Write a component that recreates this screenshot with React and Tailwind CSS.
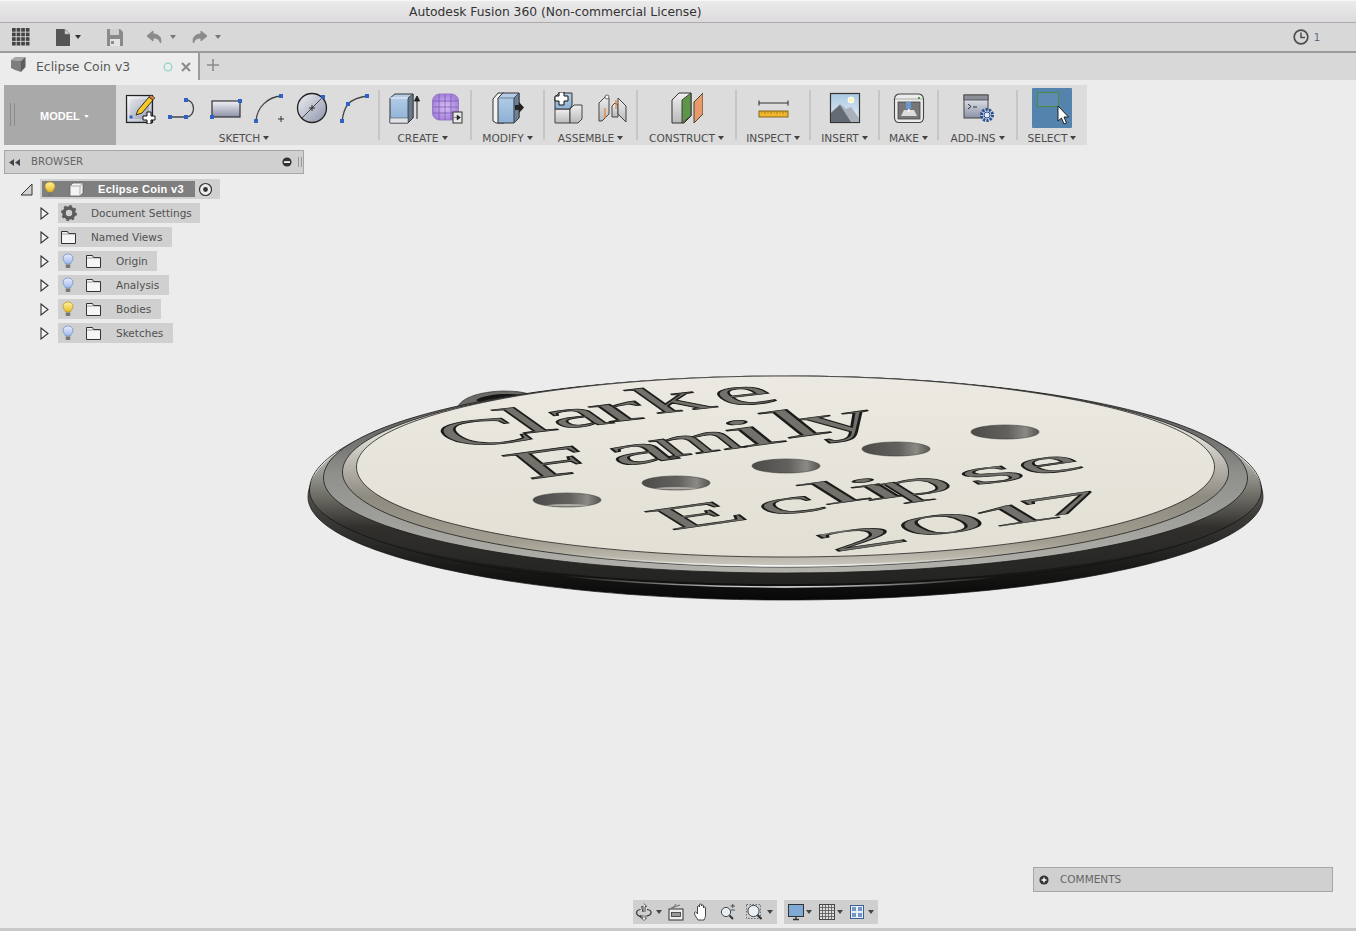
import React from "react";

const Caret = ({ c = "#555", w = 6, h = 4 }) => (
  <svg width={w} height={h} viewBox="0 0 6 4" className="shrink-0"><polygon points="0,0 6,0 3,4" fill={c} /></svg>
);

const Sq = ({ x, y, s = 4 }) => <rect x={x - s / 2} y={y - s / 2} width={s} height={s} fill="#2f62c4" />;

const I = ({ children, w = 32, h = 32 }) => (
  <svg width={w} height={h} viewBox={`0 0 ${w} ${h}`} className="shrink-0">{children}</svg>
);

const Defs = () => (
  <svg width="0" height="0" className="absolute">
    <defs>
      <linearGradient id="gA" x1="0" y1="0" x2="0" y2="1"><stop offset="0" stopColor="#f2f3f6" /><stop offset="1" stopColor="#8b90a8" /></linearGradient>
      <linearGradient id="gB" x1="0" y1="0" x2="1" y2="1"><stop offset="0" stopColor="#f0f1f4" /><stop offset="1" stopColor="#8d93aa" /></linearGradient>
      <linearGradient id="gBlue" x1="0" y1="0" x2="0" y2="1"><stop offset="0" stopColor="#b7cfe7" /><stop offset="1" stopColor="#8db0d6" /></linearGradient>
      <linearGradient id="gGrey" x1="0" y1="0" x2="0" y2="1"><stop offset="0" stopColor="#f0f0f0" /><stop offset="1" stopColor="#b9b9b9" /></linearGradient>
      <linearGradient id="gSky" x1="0" y1="0" x2="0" y2="1"><stop offset="0" stopColor="#a9c9e4" /><stop offset="1" stopColor="#e9eef3" /></linearGradient>
      <linearGradient id="gYellow" x1="0" y1="0" x2="0" y2="1"><stop offset="0" stopColor="#fff59a" /><stop offset="1" stopColor="#e8b92a" /></linearGradient>
      <linearGradient id="gBulb" x1="0" y1="0" x2="0" y2="1"><stop offset="0" stopColor="#e8efff" /><stop offset="1" stopColor="#9db8ea" /></linearGradient>
      <radialGradient id="gPurple"><stop offset="0" stopColor="#d9c2f7" /><stop offset="1" stopColor="#a683dc" /></radialGradient>
    </defs>
  </svg>
);

/* ---- ribbon icons ---- */
const SketchNew = () => (
  <I>
    <rect x="2.5" y="3.5" width="26" height="27" fill="url(#gB)" stroke="#222" strokeWidth="1.2" />
    <rect x="5" y="6" width="21" height="22" fill="none" stroke="#fff" strokeOpacity=".7" />
    <path d="M12 23 L14 18 L25 5 L29 8 L18 21 Z" fill="#f6c828" stroke="#222" strokeWidth=".9" />
    <path d="M25 5 L27 3 L31 6 L29 8 Z" fill="#d9824a" stroke="#222" strokeWidth=".6" />
    <Sq x={7} y={25} s={3} />
    <path d="M23 20h4v4h4v4h-4v4h-4v-4h-4v-4h4z" fill="#fff" stroke="#111" strokeWidth="1" />
  </I>
);
const SketchLine = () => (
  <I>
    <path d="M3 25 H19 M19 8 C29 8 29 25 19 25" fill="none" stroke="#444" strokeWidth="1.3" />
    <Sq x={3} y={25} /><Sq x={19} y={25} /><Sq x={19} y={8} />
  </I>
);
const SketchRect = () => (
  <I>
    <rect x="2" y="9" width="28" height="16" fill="url(#gA)" stroke="#333" strokeWidth="1.2" />
    <Sq x={30} y={9} /><Sq x={2} y={25} />
  </I>
);
const SketchArc = () => (
  <I>
    <path d="M3 29 C4 15 15 5 28 4" fill="none" stroke="#444" strokeWidth="1.3" />
    <Sq x={3} y={29} /><Sq x={28} y={4} />
    <path d="M25 27h6M28 24v6" stroke="#333" strokeWidth="1" />
  </I>
);
const SketchCircle = () => (
  <I>
    <circle cx="16" cy="16" r="14.5" fill="url(#gB)" stroke="#222" strokeWidth="1.3" />
    <path d="M5 27 L27 5" stroke="#333" strokeWidth=".9" />
    <path d="M13 16h6M16 13v6" stroke="#222" strokeWidth=".9" />
    <Sq x={27} y={5} />
  </I>
);
const SketchSpline = () => (
  <I>
    <path d="M3 29 C4 22 6 16 9 12 C14 7 21 5 28 4" fill="none" stroke="#444" strokeWidth="1.3" />
    <Sq x={3} y={29} /><Sq x={9} y={12} /><Sq x={28} y={4} />
  </I>
);
const CreateBox = () => (
  <I>
    <path d="M2 6 L7 2 H25 L25 26 L20 31 H2 Z" fill="url(#gBlue)" stroke="#333" strokeWidth="1" />
    <path d="M20 6 L25 2 V26 L20 31 Z" fill="#66798f" stroke="#333" strokeWidth=".8" />
    <path d="M2 6 H20" fill="none" stroke="#eef3f8" strokeWidth="1" />
    <path d="M2 26 H20 V31 H2 Z" fill="#dfe3e8" stroke="#555" strokeWidth=".6" />
    <path d="M29 27 V6 M26.5 9 L29 4 L31.5 9 Z" stroke="#222" strokeWidth="1" fill="#222" />
  </I>
);
const CreateMesh = () => (
  <I>
    <rect x="1.5" y="2" width="26" height="26" rx="7" fill="url(#gPurple)" stroke="#9a7cc6" strokeWidth="1" />
    <path d="M8 2 V28 M14 2 V28 M20 2 V28 M2 9 H27 M2 15 H27 M2 21 H27" stroke="#7355a8" strokeWidth=".7" />
    <rect x="22" y="20" width="9" height="11" fill="#e8e8e8" stroke="#333" strokeWidth="1" />
    <path d="M23 25.5 H26 V23 L29.5 25.5 L26 28 V25.5" fill="#222" stroke="#222" strokeWidth=".5" />
  </I>
);
const ModifyIcon = () => (
  <I>
    <path d="M1 7 L6 1 H12 V31 H4 L1 29 Z" fill="#f2f2f2" stroke="#333" strokeWidth="1" />
    <path d="M6 6 L11 1 H27 V26 L22 31 H6 Z" fill="url(#gBlue)" stroke="#333" strokeWidth="1" />
    <path d="M22 6 L27 1 V26 L22 31 Z" fill="#6d8096" stroke="#333" strokeWidth=".8" />
    <path d="M6 6 H22 V31" fill="none" stroke="#4a6585" strokeWidth=".7" />
    <path d="M23 13 H27 V10 L32 15.5 L27 21 V18 H23 Z" fill="#222" />
  </I>
);
const AssembleNew = () => (
  <I>
    <path d="M2 17 H17 V31 H2 Z" fill="url(#gGrey)" stroke="#444" strokeWidth="1" />
    <path d="M17 17 L21 13 H29 V27 L25 31 H17 Z" fill="url(#gGrey)" stroke="#444" strokeWidth="1" />
    <path d="M2 5 L6 1 H19 V13 L17 17 H2 Z" fill="url(#gBlue)" stroke="#333" strokeWidth="1" />
    <path d="M6 0 H11 V4 H15 V9 H11 V13 H6 V9 H2 V4 H6 Z" fill="#fff" stroke="#111" strokeWidth="1" />
  </I>
);
const AssembleJoint = () => (
  <I>
    <path d="M3 11 L10 4 L13 6 V22 L6 29 H3 Z" fill="url(#gGrey)" stroke="#444" strokeWidth="1" />
    <circle cx="11" cy="5" r="2" fill="#fff" stroke="#444" strokeWidth=".8" />
    <path d="M16 14 L19 11 L22 13 V25 L16 25 Z" fill="url(#gGrey)" stroke="#444" strokeWidth="1" />
    <path d="M22 6 L30 14 V30 L22 22 Z" fill="url(#gGrey)" stroke="#444" strokeWidth="1" />
    <path d="M9 16 V26 M20 8 V17" stroke="#ee7d22" strokeWidth="1.2" />
  </I>
);
const ConstructIcon = () => (
  <I>
    <path d="M1 8 L8 1 H20 V24 L13 31 H1 Z" fill="url(#gGrey)" stroke="#333" strokeWidth="1" />
    <path d="M11 8 L20 1 V24 L11 31 Z" fill="#5f9548" stroke="#333" strokeWidth=".9" />
    <path d="M23 10 L32 1 V22 L23 31 Z" fill="#e89b68" stroke="#333" strokeWidth=".9" />
  </I>
);
const InspectIcon = () => (
  <I>
    <path d="M2 11 H31 M2 8.5 V13.5 M31 8.5 V13.5" stroke="#333" strokeWidth="1.1" fill="none" />
    <rect x="2" y="19" width="29" height="6" fill="#f0b62d" stroke="#7d5c14" strokeWidth=".9" />
    <path d="M5 19v2M8 19v3M11 19v2M14 19v3M17 19v2M20 19v3M23 19v2M26 19v3M29 19v2" stroke="#8a6818" strokeWidth=".7" />
  </I>
);
const InsertIcon = () => (
  <I>
    <rect x="1.5" y="1.5" width="29" height="29" fill="url(#gSky)" stroke="#333" strokeWidth="1.2" />
    <circle cx="22" cy="8" r="3" fill="#fff4b8" stroke="#fff" />
    <path d="M2 30 V20 L11 12 L17 17 L22 15 L30 26 V30 Z" fill="#a9b1ba" />
    <path d="M2 30 V21 L11 13 L22 30 Z" fill="#636a73" />
  </I>
);
const MakeIcon = () => (
  <I>
    <path d="M1.5 7 Q2 2 7 2 H25 Q30 2 30.5 7 V26 Q30 30.5 26 30.5 H6 Q2 30.5 1.5 26 Z" fill="#ececec" stroke="#444" strokeWidth="1.1" />
    <rect x="5" y="10" width="22" height="17" fill="#777" stroke="#444" strokeWidth=".8" />
    <path d="M2 7 H30" stroke="#aaa" />
    <path d="M8 24 L11 18 H21 L24 24 Z" fill="#dcdcdc" />
    <rect x="13" y="10" width="5" height="7" fill="#6a98d0" />
    <rect x="15" y="17" width="1.5" height="3" fill="#fff" />
    <rect x="25" y="5" width="2" height="2" fill="#38a83a" />
  </I>
);
const AddInsIcon = () => (
  <I>
    <rect x="2" y="3" width="24" height="23" fill="url(#gA)" stroke="#444" strokeWidth="1" />
    <rect x="2" y="3" width="24" height="5" fill="#8a8f99" stroke="#444" strokeWidth=".8" />
    <path d="M6 12 L9 14.5 L6 17 M11 15 H15" stroke="#222" strokeWidth=".9" fill="none" />
    <circle cx="25" cy="23" r="5.5" fill="#cfd9ec" stroke="#2a4f8f" strokeWidth="3" strokeDasharray="2.2 1.2" />
    <circle cx="25" cy="23" r="3" fill="#e6ecf6" stroke="#2a4f8f" strokeWidth="1" />
  </I>
);
const SelectIcon = () => (
  <div className="w-[40px] h-[40px] bg-[#5483ad] rounded-[1px] relative shrink-0">
    <svg width="40" height="40" viewBox="0 0 40 40">
      <rect x="5.5" y="4.5" width="21" height="14" fill="#5f8bb2" stroke="#4f8a45" strokeWidth="1" />
      <path d="M26 18 V33 L29.5 30 L32 36 L34.5 35 L32 29 L36.5 29 Z" fill="#fff" stroke="#111" strokeWidth=".9" />
    </svg>
  </div>
);

const Group = ({ width, label, children, last, pad = "pr-0" }) => (
  <div className={`${width} flex flex-col items-center relative`}>
    <div className="h-[32px] mt-[7px] flex items-center justify-center gap-[11px] w-full">{children}</div>
    <div className={`${pad} mt-[8px] h-[12px] flex items-center gap-[3px] text-[10.6px] leading-[12px] text-[#4d4d4d]`}>
      <span>{label}</span><Caret c="#444" />
    </div>
    {!last && <div className="absolute right-[-1px] top-[5px] bottom-[5px] w-[2px] bg-[#c6c6c6]" />}
  </div>
);

/* ---- tree icons ---- */
const Bulb = ({ on }) => (
  <svg width="12" height="16" viewBox="0 0 12 16" className="shrink-0">
    <path d="M6 1 C2.7 1 1 3.2 1 5.5 C1 8 3.5 9 3.5 11 H8.5 C8.5 9 11 8 11 5.5 C11 3.2 9.3 1 6 1 Z" fill={on ? "url(#gYellow)" : "url(#gBulb)"} stroke={on ? "#b8962a" : "#6f8fc9"} strokeWidth=".8" />
    <rect x="3.7" y="11.5" width="4.6" height="3.5" rx="1" fill="#777" />
  </svg>
);
const Folder = () => (
  <svg width="15" height="13" viewBox="0 0 15 13" className="shrink-0">
    <path d="M.5 12.5 V.5 H6.5 L7.5 2.5 H14.5 V12.5 Z" fill="#f5f5f5" stroke="#333" strokeWidth="1" />
    <path d="M.5 3 H14.5" stroke="#666" strokeWidth=".6" />
  </svg>
);
const Arrow = () => (
  <svg width="9" height="13" viewBox="0 0 9 13" className="shrink-0">
    <path d="M1 1 L8 6.5 L1 12 Z" fill="#f4f4f4" stroke="#333" strokeWidth="1.1" />
  </svg>
);
const Gear = () => (
  <svg width="16" height="16" viewBox="0 0 16 16" className="shrink-0">
    <circle cx="8" cy="8" r="5" fill="none" stroke="#5c5c5c" strokeWidth="3.6" />
    <circle cx="8" cy="8" r="7" fill="none" stroke="#5c5c5c" strokeWidth="2" strokeDasharray="2.6 2.9" />
  </svg>
);

const Row = ({ w, children }) => (
  <div className="flex items-center h-[20px] mt-[4px] ml-[40px]">
    <Arrow />
    <div className={`${w} ml-[9px] h-[20px] bg-[#d0d0d0] flex items-center text-[10.5px] text-[#505050]`}>{children}</div>
  </div>
);

const Label = ({ ml, children }) => <span className={`${ml} mt-[2px]`}>{children}</span>;

const BulbRow = ({ w, on, label }) => (
  <Row w={w}>
    <span className="ml-[4px] w-[12px] flex"><Bulb on={on} /></span>
    <span className="ml-[12px] flex"><Folder /></span>
    <Label ml="ml-[15px]">{label}</Label>
  </Row>
);

/* ---- bottom nav ---- */
const NavCaret = () => <Caret c="#444" />;
const NavBar = () => (
  <div className="flex ml-[633px] gap-[7px] mb-[4px]">
    <div className="w-[144px] h-[24px] bg-[#cfcfcf] flex items-center pl-[3px]">
      <svg width="16" height="18" viewBox="0 0 16 18" className="shrink-0">
        <path d="M8 .5 L10.5 3.5 H9 V9 M7 9 V3.5 H5.5 Z" fill="#fff" stroke="#333" strokeWidth=".8" />
        <path d="M9 12 V15 H10.5 L8 17.5 L5.5 15 H7 V12" fill="#fff" stroke="#333" strokeWidth=".8" />
        <path d="M5 13.5 C-1 12.5 -.5 7 4.5 6.5 M11 6.5 C16.5 7 16.5 12 10.5 13.2" fill="none" stroke="#333" strokeWidth="1.2" />
        <path d="M5.5 11.5 L3 13.5 L5.5 15.5 Z" fill="#333" />
      </svg>
      <span className="ml-[4px] flex"><NavCaret /></span>
      <svg width="16" height="18" viewBox="0 0 16 18" className="shrink-0 ml-[6px]">
        <rect x="1" y="6" width="14" height="11" fill="#eee" stroke="#333" strokeWidth="1" />
        <rect x="3.5" y="9.5" width="9" height="4" fill="#999" stroke="#333" strokeWidth=".8" />
        <path d="M3 5 L12 2 M5 5 L8 1" stroke="#555" strokeWidth=".8" />
      </svg>
      <svg width="17" height="18" viewBox="0 0 17 18" className="shrink-0 ml-[9px]">
        <path d="M5 17 C3 14 1 11 1.5 9.5 C2.5 8 4 10 4.5 11 V4 C4.5 2.5 6.5 2.5 6.5 4 V2 C6.5 .5 8.5 .5 8.5 2 V3 C8.5 1.5 10.5 1.5 10.5 3 V5 C10.5 3.5 12.5 3.5 12.5 5 V12 C12.5 14 12 15 11 17 Z" fill="#fff" stroke="#333" strokeWidth=".9" />
      </svg>
      <svg width="16" height="18" viewBox="0 0 16 18" className="shrink-0 ml-[10px]">
        <circle cx="6" cy="9" r="4.6" fill="#e8f0f6" stroke="#444" strokeWidth="1" />
        <path d="M9.5 12.5 L13 16" stroke="#333" strokeWidth="2" />
        <path d="M10.5 3 H15 M12.7 1 V5 M10.5 7 H15" stroke="#444" strokeWidth=".9" />
      </svg>
      <svg width="17" height="18" viewBox="0 0 17 18" className="shrink-0 ml-[10px]">
        <rect x=".5" y="1.5" width="14" height="14" fill="none" stroke="#555" strokeWidth=".8" strokeDasharray="1.5 1.5" />
        <circle cx="7.5" cy="8" r="5.6" fill="#e8f0f6" stroke="#444" strokeWidth="1" />
        <path d="M11.5 12 L15.5 16" stroke="#333" strokeWidth="2.2" />
      </svg>
      <span className="ml-[4px] flex"><NavCaret /></span>
    </div>
    <div className="w-[94px] h-[24px] bg-[#cfcfcf] flex items-center pl-[4px]">
      <svg width="16" height="18" viewBox="0 0 16 18" className="shrink-0">
        <rect x=".5" y="1.5" width="15" height="12" fill="#7fa9d6" stroke="#333" strokeWidth="1" />
        <path d="M5 16.5 H11 M8 14 V16" stroke="#333" strokeWidth="1.4" />
      </svg>
      <span className="ml-[2px] flex"><NavCaret /></span>
      <svg width="16" height="18" viewBox="0 0 16 18" className="shrink-0 ml-[7px]">
        <rect x=".5" y="1.5" width="15" height="15" fill="#ddd" stroke="#444" strokeWidth="1" />
        <path d="M3.5 1.5V16.5M6.5 1.5V16.5M9.5 1.5V16.5M12.5 1.5V16.5M.5 4.5H15.5M.5 7.5H15.5M.5 10.5H15.5M.5 13.5H15.5" stroke="#555" strokeWidth=".8" />
      </svg>
      <span className="ml-[2px] flex"><NavCaret /></span>
      <svg width="14" height="14" viewBox="0 0 14 14" className="shrink-0 ml-[7px]">
        <rect x=".5" y=".5" width="13" height="13" fill="#e9eff7" stroke="#3e5f94" strokeWidth="1" />
        <rect x="2" y="2" width="4" height="4" fill="#6f97cc" /><rect x="8" y="2" width="4" height="4" fill="#6f97cc" />
        <rect x="2" y="8" width="4" height="4" fill="#6f97cc" /><rect x="8" y="8" width="4" height="4" fill="#6f97cc" />
      </svg>
      <span className="ml-[4px] flex"><NavCaret /></span>
    </div>
  </div>
);

/* ---- coin ---- */
const ell = (cx, cy, rx, rt, rb) => {
  const k = 0.5523;
  return `M${cx - rx} ${cy} C${cx - rx} ${cy - k * rt} ${cx - k * rx} ${cy - rt} ${cx} ${cy - rt} C${cx + k * rx} ${cy - rt} ${cx + rx} ${cy - k * rt} ${cx + rx} ${cy} C${cx + rx} ${cy + k * rb} ${cx + k * rx} ${cy + rb} ${cx} ${cy + rb} C${cx - k * rx} ${cy + rb} ${cx - rx} ${cy + k * rb} ${cx - rx} ${cy} Z`;
};

/* every engraved letter is placed by the centre of its box on the coin */
const Word = ({ m, letters }) => (
  <g fontFamily="'Liberation Serif', serif" fontSize="100" fill="#72716b" stroke="#1b1b19" strokeWidth="2" textAnchor="middle">
    {letters.map(([ch, x, y, off, k = 1], i) => (
      <text key={i} y={off} transform={`matrix(${m[0] * k} ${m[1] * k} ${m[2]} ${m[3]} ${x} ${y})`}>{ch}</text>
    ))}
  </g>
);

const Hole = ({ cx, cy, floor }) => (
  <g>
    <ellipse cx={cx} cy={cy} rx="35" ry="7.8" fill="#cfccc2" opacity=".6" />
    <ellipse cx={cx} cy={cy} rx="34" ry="7" fill="url(#hole)" stroke="#3a3a38" strokeWidth=".5" />
    {floor && <path d={`M${cx - 22} ${cy + 5.2} Q${cx} ${cy + 3} ${cx + 22} ${cy + 5.2} Q${cx} ${cy + 8} ${cx - 22} ${cy + 5.2} Z`} fill="#aeaca4" />}
  </g>
);

const Coin = () => (
  <svg width="980" height="240" viewBox="300 370 980 240" className="absolute left-[300px] top-[290px]">
    <defs>
      <linearGradient id="body" gradientUnits="userSpaceOnUse" x1="0" y1="470" x2="0" y2="600">
        <stop offset="0" stopColor="#6d6c66" /><stop offset=".35" stopColor="#3d3c39" /><stop offset=".75" stopColor="#1a1a18" /><stop offset="1" stopColor="#070707" />
      </linearGradient>
      <linearGradient id="torus" gradientUnits="userSpaceOnUse" x1="0" y1="465" x2="0" y2="590">
        <stop offset="0" stopColor="#a9a9a2" /><stop offset=".25" stopColor="#6d6c65" /><stop offset=".5" stopColor="#302f2c" /><stop offset="1" stopColor="#222220" />
      </linearGradient>
      <linearGradient id="flat" gradientUnits="userSpaceOnUse" x1="0" y1="430" x2="0" y2="575">
        <stop offset="0" stopColor="#6a6a67" /><stop offset=".3" stopColor="#8f8f8c" /><stop offset="1" stopColor="#b3b2ac" />
      </linearGradient>
      <linearGradient id="inner" gradientUnits="userSpaceOnUse" x1="0" y1="440" x2="0" y2="567">
        <stop offset="0" stopColor="#d9d8d1" /><stop offset=".45" stopColor="#8d8a80" /><stop offset=".8" stopColor="#a19d90" /><stop offset="1" stopColor="#cbc8be" />
      </linearGradient>
      <linearGradient id="plate" x1="0" y1="0" x2="0" y2="1">
        <stop offset="0" stopColor="#ebe9e1" /><stop offset="1" stopColor="#e2dfd4" />
      </linearGradient>
      <linearGradient id="hole" x1="0" y1="0" x2="1" y2="0">
        <stop offset="0" stopColor="#4c4b49" /><stop offset=".55" stopColor="#63625f" /><stop offset=".8" stopColor="#8b8a85" /><stop offset="1" stopColor="#55544f" />
      </linearGradient>
      <linearGradient id="glint" gradientUnits="userSpaceOnUse" x1="560" y1="0" x2="1000" y2="0">
        <stop offset="0" stopColor="#fff" stopOpacity="0" /><stop offset=".5" stopColor="#fff" stopOpacity=".95" /><stop offset="1" stopColor="#fff" stopOpacity="0" />
      </linearGradient>
    </defs>

    <path d="M457 408 C461 398 478 392 502 391 C514 391 524 392 528 394 L528 410 L460 412 Z" fill="#6b6a66" stroke="#222" strokeWidth=".6" />
    <path d="M476 400 C486 394 506 393 522 395 L505 402 L482 404 Z" fill="#151515" />

    <path d={ell(785.5, 497, 477.5, 121, 103)} fill="url(#body)" stroke="#111" strokeWidth=".7" />
    <path d={ell(785.5, 492, 476, 116, 92)} fill="url(#torus)" />
    <path d={ell(785.5, 490, 476, 114, 98)} fill="none" stroke="#111" strokeWidth=".8" />
    <path d={ell(785.5, 491, 477, 115, 96)} fill="none" stroke="url(#glint)" strokeWidth="1.4" />
    <path d={ell(785.5, 478, 462, 102, 95)} fill="url(#flat)" stroke="#1a1a1a" strokeWidth=".8" />
    <path d={ell(785.5, 472, 443, 96, 95)} fill="url(#inner)" stroke="#1a1a1a" strokeWidth=".8" />
    <path d={ell(785.5, 472, 444, 96, 94)} fill="none" stroke="url(#glint)" strokeWidth="1.6" />
    <path d={ell(785.5, 467, 429, 91, 90)} fill="url(#plate)" stroke="#222" strokeWidth=".8" />

    <Hole cx={567} cy={500} floor />
    <Hole cx={676} cy={483} floor />
    <Hole cx={786} cy={466} />
    <Hole cx={896} cy={449} />
    <Hole cx={1005} cy={432} />

    <Word m={[1.25, -0.14, 0.48, 0.34]} letters={[["C", 482, 432, 34], ["l", 525, 420, 34, 1.1], ["a", 577, 418, 23], ["r", 622, 412, 23, 1.2], ["k", 670, 399, 34], ["e", 745, 396, 23]]} />
    <Word m={[1.4, -0.19, 0.45, 0.36]} letters={[["F", 552, 462, 34], ["a", 640, 454, 23], ["m", 698, 444, 23, 0.75], ["i", 750, 432, 34, 1.2], ["l", 795, 423, 34, 1.2], ["y", 847, 427, 12]]} />
    <Word m={[1.35, -0.19, 0.45, 0.28]} letters={[["E", 697, 515, 34], ["c", 790, 506, 23], ["l", 834, 492, 34, 1.3], ["i", 876, 488, 34, 1.3], ["p", 922, 490, 12], ["s", 992, 475, 23, 1.1], ["e", 1050, 465, 23]]} />
    <Word m={[1.65, -0.24, 0.4, 0.24]} letters={[["2", 860, 538, 34], ["0", 941, 524, 34], ["1", 1014, 514, 34], ["7", 1065, 504, 34]]} />
  </svg>
);

export default function App() {
  return (
    <div className="w-[1356px] h-[931px] overflow-hidden flex flex-col bg-[#ececec] font-['DejaVu_Sans',sans-serif]">
      <Defs />
      {/* title */}
      <div className="h-[23px] pt-[1px] bg-gradient-to-b from-[#ecebec] to-[#dcdadc] border-t border-[#f8f8f8] border-b border-b-[#ababab] flex items-center pl-[409px] text-[12.3px] text-[#333] shrink-0">
        Autodesk Fusion 360 (Non-commercial License)
      </div>
      {/* quick toolbar */}
      <div className="h-[30px] bg-[#d8d8d8] border-b-2 border-[#9c9c9c] flex items-center shrink-0 relative">
        <svg width="18" height="18" viewBox="0 0 18 18" className="ml-[12px] shrink-0">
          {[0, 4.6, 9.2, 13.8].map((y) => [0, 4.6, 9.2, 13.8].map((x) => <rect key={`${x}-${y}`} x={x} y={y} width="3.7" height="3.7" fill="#444" />))}
        </svg>
        <svg width="14" height="17" viewBox="0 0 14 17" className="ml-[26px] shrink-0">
          <path d="M0 0 H8 L14 6 V17 H0 Z" fill="#555" /><path d="M8.7 0 L14 5.3 H8.7 Z" fill="#d8d8d8" stroke="#555" strokeWidth=".5" />
        </svg>
        <span className="ml-[5px] flex"><Caret c="#333" /></span>
        <svg width="16" height="17" viewBox="0 0 16 17" className="ml-[26px] shrink-0">
          <path d="M0 0 H13 L16 3 V17 H0 Z" fill="#8a8a8a" />
          <rect x="3" y="0" width="9" height="6" fill="#cfcfcf" />
          <rect x="3" y="10" width="10" height="7" fill="#e4e4e4" />
          <rect x="4" y="12" width="3" height="3" fill="#8a8a8a" />
        </svg>
        <svg width="17" height="14" viewBox="0 0 17 14" className="ml-[23px] shrink-0">
          <path d="M7 1 L1 6 L7 11 V8 C11 8 13 9 14.5 13 C16 8 13 4 7 4 Z" fill="#8b8b8b" stroke="#8b8b8b" />
        </svg>
        <span className="ml-[7px] flex"><Caret c="#777" /></span>
        <svg width="17" height="14" viewBox="0 0 17 14" className="ml-[15px] shrink-0">
          <path d="M10 1 L16 6 L10 11 V8 C6 8 4 9 2.5 13 C1 8 4 4 10 4 Z" fill="#8b8b8b" stroke="#8b8b8b" />
        </svg>
        <span className="ml-[7px] flex"><Caret c="#777" /></span>
        <div className="ml-auto mr-[36px] flex items-center gap-[5px]">
          <svg width="16" height="16" viewBox="0 0 16 16">
            <circle cx="8" cy="8" r="6.8" fill="none" stroke="#4d4d4d" strokeWidth="1.7" />
            <path d="M8 3.5 V8.5 H12" fill="none" stroke="#4d4d4d" strokeWidth="1.5" />
          </svg>
          <span className="text-[10px] text-[#566a80]">1</span>
        </div>
      </div>
      {/* tabs */}
      <div className="h-[27px] bg-[#d8d8d8] flex items-center shrink-0">
        <div className="w-[200px] h-full bg-[#ececec] border-r-2 border-[#9c9c9c] flex items-center relative">
          <svg width="16" height="16" viewBox="0 0 16 16" className="ml-[10px] mb-[3px] shrink-0">
            <path d="M1 3 L5 0 H15.5 L11 4 Z" fill="#a5a5a5" />
            <path d="M1 3 L11 4 V15 L5 13 L1 11 Z" fill="#7d7d7d" />
            <path d="M11 4 L15.5 0 V10 L11 15 Z" fill="#5e5e5e" />
          </svg>
          <span className="ml-[10px] mt-[2px] text-[12.4px] text-[#575757]">Eclipse Coin v3</span>
          <svg width="10" height="10" viewBox="0 0 10 10" className="ml-[33px] shrink-0 absolute left-[130px]">
            <circle cx="5" cy="5" r="3.8" fill="none" stroke="#8fd6c6" strokeWidth="1.3" />
          </svg>
          <svg width="10" height="10" viewBox="0 0 10 10" className="absolute left-[181px]">
            <path d="M1 1 L9 9 M9 1 L1 9" stroke="#8d8d8d" strokeWidth="2.2" />
          </svg>
        </div>
        <svg width="12" height="12" viewBox="0 0 12 12" className="ml-[7px] mb-[3px]">
          <path d="M6 0 V12 M0 6 H12" stroke="#8a8a8a" strokeWidth="1.6" />
        </svg>
      </div>

      {/* canvas */}
      <div className="flex-1 relative flex flex-col min-h-0">
        <Coin />
        {/* ribbon */}
        <div className="relative mt-[5px] ml-[4px] w-[1083px] h-[60px] bg-[#dcdcdc] flex shrink-0">
          <div className="w-[112px] h-full bg-[#a9a9a9] flex items-center relative shrink-0">
            <div className="absolute left-[6px] top-[18px] w-[5px] h-[23px] border-x border-[#8b8b8b]" />
            <div className="ml-[36px] mt-[2px] flex items-center gap-[4px] text-white font-bold text-[11px] font-['Liberation_Sans',sans-serif]">
              <span>MODEL</span><Caret c="#fff" w={5} h={3} />
            </div>
          </div>
          <Group width="w-[263px]" label="SKETCH" pad="pr-[7px]">
            <SketchNew /><SketchLine /><SketchRect /><SketchArc /><SketchCircle /><SketchSpline />
          </Group>
          <Group width="w-[92px]" label="CREATE" pad="pr-[5px]"><CreateBox /><CreateMesh /></Group>
          <Group width="w-[73px]" label="MODIFY"><ModifyIcon /></Group>
          <Group width="w-[93px]" label="ASSEMBLE"><AssembleNew /><AssembleJoint /></Group>
          <Group width="w-[99px]" label="CONSTRUCT"><ConstructIcon /></Group>
          <Group width="w-[74px]" label="INSPECT"><InspectIcon /></Group>
          <Group width="w-[69px]" label="INSERT"><InsertIcon /></Group>
          <Group width="w-[59px]" label="MAKE"><MakeIcon /></Group>
          <Group width="w-[79px]" label="ADD-INS"><AddInsIcon /></Group>
          <Group width="w-[70px]" label="SELECT" last><SelectIcon /></Group>
        </div>

        {/* browser */}
        <div className="relative mt-[5px] ml-[4px] w-[300px] h-[24px] bg-[#d0d0d0] border border-[#a6a6a6] flex items-center shrink-0">
          <svg width="11" height="7" viewBox="0 0 11 7" className="ml-[4px]">
            <path d="M5 0 V7 L0 3.5 Z M11 0 V7 L6 3.5 Z" fill="#444" />
          </svg>
          <span className="ml-[11px] text-[10.2px] text-[#666]">BROWSER</span>
          <svg width="10" height="10" viewBox="0 0 10 10" className="ml-auto">
            <circle cx="5" cy="5" r="4.6" fill="#333" /><rect x="2" y="4.2" width="6" height="1.7" fill="#fff" />
          </svg>
          <div className="ml-[6px] mr-[1px] w-[4px] h-[10px] border-x border-[#999]" />
        </div>

        <div className="relative mt-[5px] flex flex-col shrink-0">
          <div className="flex items-center h-[20px] ml-[20px]">
            <svg width="13" height="13" viewBox="0 0 13 13" className="shrink-0">
              <path d="M12 1 V12 H1 Z" fill="#d4d4d4" stroke="#333" strokeWidth="1" />
            </svg>
            <div className="ml-[7px] w-[180px] h-[20px] bg-[#d0d0d0] flex items-center">
              <div className="ml-[2px] w-[153px] h-[16px] bg-[#7f7f7f] flex items-center">
                <span className="ml-[2px] flex"><Bulb on /></span>
                <svg width="15" height="15" viewBox="0 0 15 15" className="ml-[13px] shrink-0">
                  <path d="M1 4 L4 1 H14 V11 L11 14 H1 Z" fill="#f4f4f4" stroke="#666" strokeWidth=".8" />
                  <path d="M1 4 H11 V14 M11 4 L14 1" fill="none" stroke="#999" strokeWidth=".8" />
                </svg>
                <span className="ml-[14px] text-white font-bold text-[11px] font-['Liberation_Sans',sans-serif] tracking-[0.3px]">Eclipse Coin v3</span>
              </div>
              <svg width="15" height="15" viewBox="0 0 15 15" className="ml-[3px]">
                <circle cx="7.5" cy="7.5" r="6" fill="#eee" stroke="#333" strokeWidth="1.2" />
                <circle cx="7.5" cy="7.5" r="2.4" fill="#333" />
              </svg>
            </div>
          </div>
          <Row w="w-[142px]">
            <span className="ml-[3px] flex"><Gear /></span>
            <Label ml="ml-[14px]">Document Settings</Label>
          </Row>
          <Row w="w-[114px]">
            <span className="ml-[3px] flex"><Folder /></span>
            <Label ml="ml-[15px]">Named Views</Label>
          </Row>
          <BulbRow w="w-[99px]" label="Origin" />
          <BulbRow w="w-[111px]" label="Analysis" />
          <BulbRow w="w-[103px]" on label="Bodies" />
          <BulbRow w="w-[115px]" label="Sketches" />
        </div>

        {/* bottom */}
        <div className="relative mt-auto flex justify-end pr-[23px] mb-[8px] shrink-0">
          <div className="w-[300px] h-[25px] bg-[#d0d0d0] border border-[#a6a6a6] flex items-center">
            <svg width="10" height="10" viewBox="0 0 10 10" className="ml-[5px]">
              <circle cx="5" cy="5" r="4.6" fill="#333" /><path d="M2.5 5 H7.5 M5 2.5 V7.5" stroke="#fff" strokeWidth="1.4" />
            </svg>
            <span className="ml-[11px] text-[10.5px] text-[#666]">COMMENTS</span>
          </div>
        </div>
        <div className="relative"><NavBar /></div>
      </div>
      <div className="h-[3px] bg-[#c8c8c8] shrink-0" />
    </div>
  );
}
